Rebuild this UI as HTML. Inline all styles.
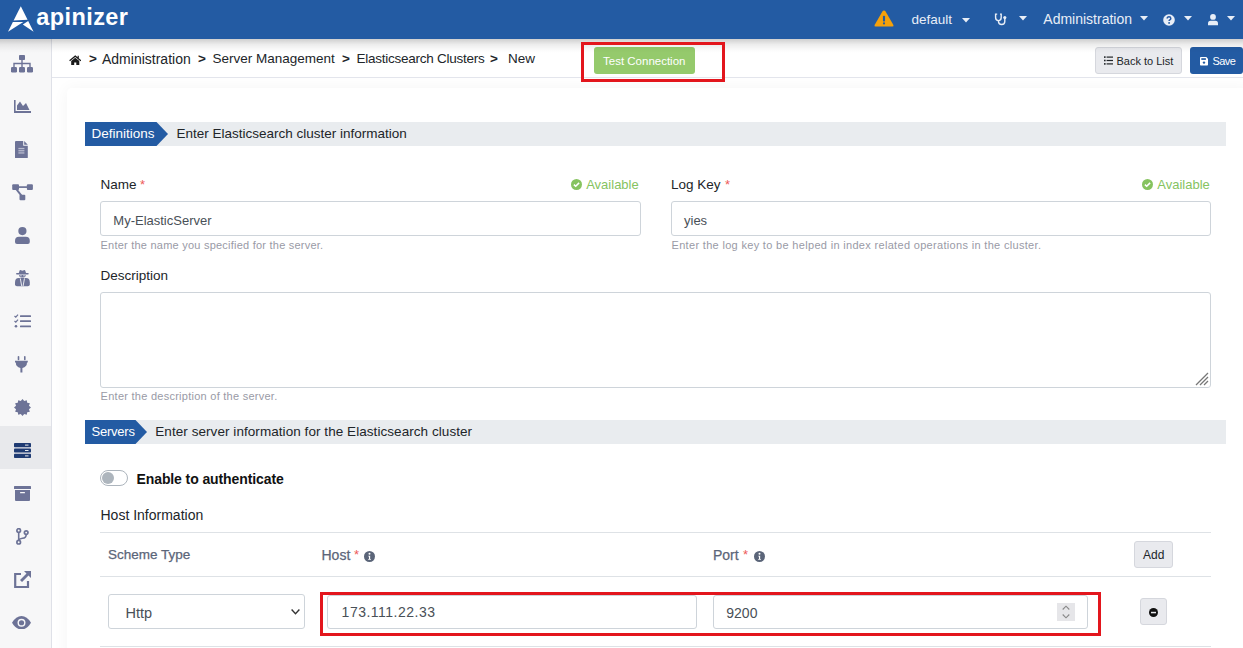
<!DOCTYPE html>
<html><head><meta charset="utf-8"><title>Apinizer</title>
<style>
html,body{margin:0;padding:0;width:1243px;height:648px;overflow:hidden;background:#fff;}
body{position:relative;font-family:"Liberation Sans",sans-serif;}
.t{position:absolute;white-space:nowrap;}
.r{position:absolute;}
</style></head><body>
<div class="r" style="left:0px;top:0px;width:1243px;height:39px;background:#235ba3;"></div>
<div class="r" style="left:0px;top:39px;width:1243px;height:14px;background:linear-gradient(rgba(0,0,0,0.19),rgba(0,0,0,0.07) 40%,rgba(0,0,0,0.015) 80%,rgba(0,0,0,0));z-index:5;"></div>
<svg class="r" style="left:4px;top:3px;width:34px;height:32px" viewBox="0 0 34 32">
<path d="M16.8 3.2 L23.6 16.8 L9.6 17.5 Z" fill="#fff"/>
<path d="M8.9 19 L19.3 19 L4 28.7 Z" fill="#fff"/>
<path d="M24.2 18 L18.8 21.5 L29.6 28.7 Z" fill="#fff"/>
</svg>
<div class="t" style="left:36.3px;top:5.61px;font-size:23.5px;line-height:23.5px;color:#fff;font-weight:bold;letter-spacing:0.4px;">apinizer</div>
<svg class="r" style="left:874px;top:10px;width:20px;height:17px" viewBox="0 0 20 17">
<path d="M10 0.5 Q11 0.5 11.6 1.5 L19.4 15 Q20 16.5 18.4 16.5 L1.6 16.5 Q0 16.5 0.6 15 L8.4 1.5 Q9 0.5 10 0.5Z" fill="#f5a10b"/>
<rect x="8.95" y="5.8" width="2.1" height="5.8" rx="0.8" fill="#235ba3"/><circle cx="10" cy="13.4" r="1.05" fill="#235ba3"/>
</svg>
<div class="t" style="left:911.5px;top:12.67px;font-size:13.5px;line-height:13.5px;color:#e8eef7;font-weight:normal;letter-spacing:0px;">default</div>
<svg class="r" style="left:961.5px;top:17.8px;width:8px;height:5px" viewBox="0 0 8 5"><path d="M0 0H8L4 4.5Z" fill="#e8eef7"/></svg>
<svg class="r" style="left:990px;top:10px;width:22px;height:20px" viewBox="0 0 22 20">
<path d="M7.2 4.1 H5.6 V7.5 Q5.6 10.6 8.5 10.6 Q11.2 10.6 11.2 7.5 V4.1 H10" fill="none" stroke="#e8eef7" stroke-width="1.4"/>
<path d="M8.5 10.6 V11.5 Q8.5 14.5 11.7 14.5 Q14.8 14.5 14.8 11.5 V8" fill="none" stroke="#e8eef7" stroke-width="1.4"/>
<circle cx="14.8" cy="7.6" r="1.6" fill="#e8eef7"/>
</svg>
<svg class="r" style="left:1019px;top:15.8px;width:8px;height:5px" viewBox="0 0 8 5"><path d="M0 0H8L4 4.5Z" fill="#e8eef7"/></svg>
<div class="t" style="left:1043.3px;top:12.35px;font-size:14px;line-height:14px;color:#e8eef7;font-weight:normal;letter-spacing:0px;">Administration</div>
<svg class="r" style="left:1140px;top:15.6px;width:8px;height:5px" viewBox="0 0 8 5"><path d="M0 0H8L4 4.5Z" fill="#e8eef7"/></svg>
<svg class="r" style="left:1163px;top:14px;width:12px;height:12px" viewBox="0 0 12 12">
<circle cx="6" cy="6" r="5.8" fill="#e8eef7"/>
<path d="M4.2 4.6 Q4.2 2.8 6 2.8 Q7.8 2.8 7.8 4.4 Q7.8 5.3 6.8 5.8 Q6.1 6.2 6.1 7" fill="none" stroke="#2559a5" stroke-width="1.5"/>
<circle cx="6.1" cy="8.9" r="0.95" fill="#235ba3"/>
</svg>
<svg class="r" style="left:1183.5px;top:15.6px;width:8px;height:5px" viewBox="0 0 8 5"><path d="M0 0H8L4 4.5Z" fill="#e8eef7"/></svg>
<svg class="r" style="left:1207px;top:13px;width:12px;height:13px" viewBox="0 0 12 13">
<circle cx="6" cy="3.9" r="2.9" fill="#e8eef7"/>
<path d="M1 12.3 V10.6 Q1 7.8 3.6 7.8 H8.4 Q11 7.8 11 10.6 V12.3 Z" fill="#e8eef7"/>
</svg>
<svg class="r" style="left:1227px;top:15.6px;width:8px;height:5px" viewBox="0 0 8 5"><path d="M0 0H8L4 4.5Z" fill="#e8eef7"/></svg>
<div class="r" style="left:0px;top:39px;width:51px;height:609px;background:#f7f7f8;"></div>
<div class="r" style="left:51px;top:39px;width:1px;height:609px;background:#dfe1e8;"></div>
<div class="r" style="left:0px;top:426px;width:51px;height:43px;background:#e8e9ec;"></div>
<svg class="r" style="left:11px;top:54.6px;width:22px;height:18px" viewBox="0 0 22 18">
<rect x="8" y="0" width="6" height="5" rx="0.8" fill="#6d7397"/>
<path d="M11 5V8 M3 12V8.5H19V12 M11 8V12" stroke="#6d7397" stroke-width="1.4" fill="none"/>
<rect x="0" y="12" width="6" height="5.5" rx="1.2" fill="#6d7397"/>
<rect x="8" y="12" width="6" height="5.5" rx="1.2" fill="#6d7397"/>
<rect x="16" y="12" width="6" height="5.5" rx="1.2" fill="#6d7397"/>
</svg>
<svg class="r" style="left:14px;top:100px;width:17px;height:13px" viewBox="0 0 17 13">
<path d="M0 0H1.6V11H17V13H0Z" fill="#6d7397"/>
<path d="M3 10V5.5L6 1.5L9 6L12 3L15.5 10Z" fill="#6d7397"/>
</svg>
<svg class="r" style="left:15.3px;top:140.6px;width:12.8px;height:17.4px" viewBox="0 0 12.8 17.4">
<path d="M1 0H8.2V4.3Q8.2 4.8 8.7 4.8H12.8V16.4Q12.8 17.4 11.8 17.4H1Q0 17.4 0 16.4V1Q0 0 1 0Z" fill="#6d7397"/>
<path d="M9.2 0L12.8 3.7H9.2Z" fill="#6d7397"/>
<rect x="3.4" y="6.9" width="6" height="1.3" fill="#b9bccf"/><rect x="3.4" y="9.1" width="6" height="1.3" fill="#b9bccf"/><rect x="3.4" y="11.3" width="6" height="1.3" fill="#b9bccf"/>
</svg>
<svg class="r" style="left:11.5px;top:184px;width:22px;height:17px" viewBox="0 0 22 17">
<rect x="0.2" y="0.3" width="6.8" height="5.8" rx="1" fill="#6d7397"/>
<rect x="14.9" y="0.3" width="6" height="5.8" rx="1" fill="#6d7397"/>
<rect x="7.5" y="10.8" width="5.8" height="5.5" rx="1" fill="#6d7397"/>
<path d="M6 3.1H15" stroke="#6d7397" stroke-width="1.7"/>
<path d="M4.3 5.2L9.6 11.8" stroke="#6d7397" stroke-width="1.9"/>
</svg>
<svg class="r" style="left:14.8px;top:226.6px;width:14.8px;height:17px" viewBox="0 0 14.8 17">
<circle cx="7.4" cy="4.1" r="4.1" fill="#6d7397"/>
<path d="M0 15V14Q0 9.8 4 9.8H10.8Q14.8 9.8 14.8 14V15Q14.8 17 12.8 17H2Q0 17 0 15Z" fill="#6d7397"/>
</svg>
<svg class="r" style="left:14.8px;top:270.3px;width:14.8px;height:16.3px" viewBox="0 0 14.8 16.3">
<path d="M3.7 3.3L4.6 0.4Q4.8 0 5.3 0.1L7.4 0.8L9.5 0.1Q10 0 10.2 0.4L11.1 3.3Z" fill="#6d7397"/>
<rect x="1.1" y="3.1" width="12.6" height="1.3" rx="0.6" fill="#6d7397"/>
<path d="M4.1 4.9H10.7Q10.7 7.6 7.4 7.6Q4.1 7.6 4.1 4.9Z" fill="#6d7397"/>
<rect x="4.8" y="5.3" width="2" height="1" fill="#c9cbd9"/><rect x="8" y="5.3" width="2" height="1" fill="#c9cbd9"/>
<path d="M0 14.3V12.5Q0 8.1 3.8 8.1H11Q14.8 8.1 14.8 12.5V14.3Q14.8 16.3 12.8 16.3H2Q0 16.3 0 14.3Z" fill="#6d7397"/>
<path d="M5.3 8.4L6.7 16 M9.5 8.4L8.1 16" stroke="#f7f7f8" stroke-width="0.9"/>
</svg>
<svg class="r" style="left:13.5px;top:314px;width:17px;height:14px" viewBox="0 0 17 14">
<path d="M0.5 2L1.8 3.2L4 0.6 M0.5 7L1.8 8.2L4 5.6" stroke="#6d7397" stroke-width="1.2" fill="none"/>
<circle cx="2" cy="12.3" r="1.3" fill="#6d7397"/>
<rect x="6" y="1.2" width="11" height="1.8" rx="0.5" fill="#6d7397"/>
<rect x="6" y="6.2" width="11" height="1.8" rx="0.5" fill="#6d7397"/>
<rect x="6" y="11.4" width="11" height="1.8" rx="0.5" fill="#6d7397"/>
</svg>
<svg class="r" style="left:15.3px;top:356.3px;width:12.8px;height:16.4px" viewBox="0 0 12.8 16.4">
<rect x="2.7" y="0" width="1.6" height="4.2" rx="0.8" fill="#6d7397"/>
<rect x="9" y="0" width="1.6" height="4.2" rx="0.8" fill="#6d7397"/>
<path d="M0 4.7H12.8V6.4H12Q12 10.8 7.4 12.1V16.4H5.4V12.1Q0.8 10.8 0.8 6.4H0Z" fill="#6d7397"/>
</svg>
<svg class="r" style="left:14px;top:399px;width:17px;height:17px" viewBox="0 0 16.8 16.8">
<polygon points="16.80,8.40 14.78,10.11 15.67,12.60 13.07,13.07 12.60,15.67 10.11,14.78 8.40,16.80 6.69,14.78 4.20,15.67 3.73,13.07 1.13,12.60 2.02,10.11 0.00,8.40 2.02,6.69 1.13,4.20 3.73,3.73 4.20,1.13 6.69,2.02 8.40,0.00 10.11,2.02 12.60,1.13 13.07,3.73 15.67,4.20 14.78,6.69" fill="#6d7397"/>
</svg>
<svg class="r" style="left:14px;top:443px;width:17px;height:15px" viewBox="0 0 17 15">
<rect x="0" y="0" width="17" height="4.2" rx="0.8" fill="#1f3b73"/>
<rect x="0" y="5.4" width="17" height="4.2" rx="0.8" fill="#1f3b73"/>
<rect x="0" y="10.8" width="17" height="4.2" rx="0.8" fill="#1f3b73"/>
<rect x="11" y="1.6" width="3.5" height="1" fill="#e8e9ec"/><rect x="11" y="7" width="3.5" height="1" fill="#e8e9ec"/><rect x="11" y="12.4" width="3.5" height="1" fill="#e8e9ec"/>
</svg>
<svg class="r" style="left:14px;top:486px;width:17px;height:15px" viewBox="0 0 17 15">
<rect x="0" y="0" width="17" height="3" rx="0.5" fill="#6d7397"/>
<path d="M1 4H16V14Q16 15 15 15H2Q1 15 1 14Z" fill="#6d7397"/>
<rect x="6" y="6" width="5" height="1.3" rx="0.6" fill="#f7f7f9"/>
</svg>
<svg class="r" style="left:15.5px;top:528px;width:14px;height:17px" viewBox="0 0 14 17">
<circle cx="2.7" cy="2.5" r="1.8" fill="none" stroke="#6d7397" stroke-width="1.7"/>
<circle cx="2.7" cy="14.2" r="1.8" fill="none" stroke="#6d7397" stroke-width="1.7"/>
<circle cx="10.2" cy="4.6" r="1.8" fill="none" stroke="#6d7397" stroke-width="1.7"/>
<path d="M2.7 4.3V12.4 M10.2 6.4Q10.2 9.8 6.5 10.3Q3.2 10.8 2.7 12.4" fill="none" stroke="#6d7397" stroke-width="1.6"/>
</svg>
<svg class="r" style="left:14px;top:571px;width:17px;height:17px" viewBox="0 0 17 17">
<path d="M7 3H1.2V16H14V10" fill="none" stroke="#6d7397" stroke-width="2.2"/>
<path d="M10 0H17V7L14.5 4.5L8 11L6 9L12.5 2.5Z" fill="#6d7397"/>
</svg>
<svg class="r" style="left:12px;top:615.5px;width:19px;height:13.5px" viewBox="0 0 19 13.5">
<path d="M0 6.75Q4 0 9.5 0Q15 0 19 6.75Q15 13.5 9.5 13.5Q4 13.5 0 6.75Z" fill="#6d7397"/>
<circle cx="9.5" cy="6.75" r="4" fill="#f7f7f9"/>
<circle cx="9.5" cy="6.75" r="2.6" fill="#6d7397"/>
</svg>
<div class="r" style="left:52px;top:39px;width:1191px;height:38px;background:#fff;"></div>
<div class="r" style="left:52px;top:77px;width:1191px;height:1px;background:#e3e5ec;"></div>
<div class="r" style="left:52px;top:78px;width:1191px;height:570px;background:#fff;"></div>
<div class="r" style="left:67px;top:88px;width:1183px;height:572px;background:#fff;box-shadow:0 1px 16px 1px rgba(0,0,0,0.045);border-radius:5px;"></div>
<svg class="r" style="left:68.5px;top:54.5px;width:12.5px;height:10.5px" viewBox="0 0 12.5 10.5">
<path d="M6.25 0.3L0.2 5.3L1 6.2L6.25 2L11.5 6.2L12.3 5.3L9.8 3.2V0.8H8.6V2.2Z" fill="#1a1a1a"/>
<path d="M2.2 6V10.5H5.2V7.6H7.3V10.5H10.3V6L6.25 2.7Z" fill="#1a1a1a"/>
</svg>
<div class="t" style="left:89.0px;top:52.37px;font-size:13.5px;line-height:13.5px;color:#212529;font-weight:bold;letter-spacing:0px;">&gt;</div>
<div class="t" style="left:102.0px;top:51.95px;font-size:14px;line-height:14px;color:#212529;font-weight:normal;letter-spacing:0px;">Administration</div>
<div class="t" style="left:198.0px;top:52.37px;font-size:13.5px;line-height:13.5px;color:#212529;font-weight:bold;letter-spacing:0px;">&gt;</div>
<div class="t" style="left:212.5px;top:52.37px;font-size:13.5px;line-height:13.5px;color:#212529;font-weight:normal;letter-spacing:0px;">Server Management</div>
<div class="t" style="left:342.0px;top:52.37px;font-size:13.5px;line-height:13.5px;color:#212529;font-weight:bold;letter-spacing:0px;">&gt;</div>
<div class="t" style="left:356.5px;top:52.37px;font-size:13.5px;line-height:13.5px;color:#212529;font-weight:normal;letter-spacing:-0.25px;">Elasticsearch Clusters</div>
<div class="t" style="left:490.0px;top:52.37px;font-size:13.5px;line-height:13.5px;color:#212529;font-weight:bold;letter-spacing:0px;">&gt;</div>
<div class="t" style="left:508.0px;top:52.37px;font-size:13.5px;line-height:13.5px;color:#212529;font-weight:normal;letter-spacing:0px;">New</div>
<div class="r" style="left:594px;top:47px;width:101px;height:27px;background:#95ca6c;border-radius:3px;"></div>
<div class="t" style="left:603.0px;top:56.27px;font-size:11.5px;line-height:11.5px;color:#fff;font-weight:normal;letter-spacing:0px;">Test Connection</div>
<div class="r" style="left:581px;top:42px;width:144px;height:40px;border:3px solid #e3161d;box-sizing:border-box;z-index:6;"></div>
<div class="r" style="left:1095px;top:47px;width:87px;height:27px;background:#e9eaee;border:1px solid #d5d7dd;box-sizing:border-box;border-radius:3px;"></div>
<svg class="r" style="left:1104px;top:56px;width:9px;height:9px" viewBox="0 0 9 9">
<rect x="0" y="0.3" width="1.6" height="1.6" fill="#212529"/><rect x="0" y="3.7" width="1.6" height="1.6" fill="#212529"/><rect x="0" y="7.1" width="1.6" height="1.6" fill="#212529"/>
<rect x="2.6" y="0.5" width="6.4" height="1.2" fill="#212529"/><rect x="2.6" y="3.9" width="6.4" height="1.2" fill="#212529"/><rect x="2.6" y="7.3" width="6.4" height="1.2" fill="#212529"/>
</svg>
<div class="t" style="left:1116.5px;top:55.69px;font-size:11px;line-height:11px;color:#212529;font-weight:normal;letter-spacing:0px;">Back to List</div>
<div class="r" style="left:1190px;top:47px;width:53px;height:27px;background:#235ba3;border-radius:3px;"></div>
<svg class="r" style="left:1200px;top:57px;width:8px;height:8.5px" viewBox="0 0 8 8.5">
<path d="M0.8 0H6.3L8 1.7V7.7Q8 8.5 7.2 8.5H0.8Q0 8.5 0 7.7V0.8Q0 0 0.8 0Z" fill="#fff"/>
<rect x="1.3" y="1.2" width="4.6" height="1.7" fill="#235ba3"/>
<circle cx="4" cy="5.6" r="1.2" fill="#235ba3"/>
</svg>
<div class="t" style="left:1212.5px;top:55.59px;font-size:11px;line-height:11px;color:#fff;font-weight:normal;letter-spacing:-0.6px;">Save</div>
<div class="r" style="left:85px;top:122px;width:1141px;height:24px;background:#e9ecef;"></div>
<div class="r" style="left:85px;top:122px;width:71px;height:24px;background:#235ba3;"></div>
<svg class="r" style="left:156px;top:122px;width:12px;height:24px" viewBox="0 0 12 24"><path d="M0 0H0.5L12 12L0.5 24H0Z" fill="#235ba3"/></svg>
<div class="t" style="left:91.6px;top:127.07px;font-size:13.5px;line-height:13.5px;color:#fff;font-weight:normal;letter-spacing:0px;">Definitions</div>
<div class="t" style="left:176.5px;top:127.07px;font-size:13.5px;line-height:13.5px;color:#212529;font-weight:normal;letter-spacing:0px;">Enter Elasticsearch cluster information</div>
<div class="t" style="left:100.5px;top:177.57px;font-size:13.5px;line-height:13.5px;color:#212529;font-weight:normal;letter-spacing:0px;">Name</div>
<div class="t" style="left:140.0px;top:178.00px;font-size:13px;line-height:13px;color:#ee5a5a;font-weight:normal;letter-spacing:0px;">*</div>
<svg class="r" style="left:571px;top:179.3px;width:11px;height:11px" viewBox="0 0 11 11"><circle cx="5.5" cy="5.5" r="5.5" fill="#86c35f"/><path d="M2.9 5.6L4.7 7.3L8.1 3.9" stroke="#fff" stroke-width="1.5" fill="none"/></svg>
<div class="t" style="left:586.2px;top:178.00px;font-size:13px;line-height:13px;color:#86c35f;font-weight:normal;letter-spacing:0px;">Available</div>
<div class="r" style="left:100px;top:201px;width:541px;height:35px;border:1px solid #ced4da;box-sizing:border-box;border-radius:3px;background:#fff;"></div>
<div class="t" style="left:113.3px;top:213.80px;font-size:13px;line-height:13px;color:#495057;font-weight:normal;letter-spacing:0px;">My-ElasticServer</div>
<div class="t" style="left:100.5px;top:239.89px;font-size:11px;line-height:11px;color:#999aa6;font-weight:normal;letter-spacing:0.23px;">Enter the name you specified for the server.</div>
<div class="t" style="left:671.0px;top:177.57px;font-size:13.5px;line-height:13.5px;color:#212529;font-weight:normal;letter-spacing:0px;">Log Key</div>
<div class="t" style="left:725.0px;top:178.00px;font-size:13px;line-height:13px;color:#ee5a5a;font-weight:normal;letter-spacing:0px;">*</div>
<svg class="r" style="left:1142px;top:179.3px;width:11px;height:11px" viewBox="0 0 11 11"><circle cx="5.5" cy="5.5" r="5.5" fill="#86c35f"/><path d="M2.9 5.6L4.7 7.3L8.1 3.9" stroke="#fff" stroke-width="1.5" fill="none"/></svg>
<div class="t" style="left:1157.3px;top:178.00px;font-size:13px;line-height:13px;color:#86c35f;font-weight:normal;letter-spacing:0px;">Available</div>
<div class="r" style="left:671px;top:201px;width:540px;height:35px;border:1px solid #ced4da;box-sizing:border-box;border-radius:3px;background:#fff;"></div>
<div class="t" style="left:684.0px;top:213.80px;font-size:13px;line-height:13px;color:#495057;font-weight:normal;letter-spacing:0px;">yies</div>
<div class="t" style="left:671.5px;top:239.89px;font-size:11px;line-height:11px;color:#999aa6;font-weight:normal;letter-spacing:0.32px;">Enter the log key to be helped in index related operations in the cluster.</div>
<div class="t" style="left:100.6px;top:268.57px;font-size:13.5px;line-height:13.5px;color:#212529;font-weight:normal;letter-spacing:0px;">Description</div>
<div class="r" style="left:100px;top:292px;width:1111px;height:96px;border:1px solid #ced4da;box-sizing:border-box;border-radius:3px;background:#fff;"></div>
<svg class="r" style="left:1194px;top:371px;width:15px;height:15px" viewBox="0 0 15 15">
<path d="M14 2L2 14 M14 6L6 14 M14 10L10 14" stroke="#777" stroke-width="1.3"/>
</svg>
<div class="t" style="left:100.6px;top:390.79px;font-size:11px;line-height:11px;color:#999aa6;font-weight:normal;letter-spacing:0.26px;">Enter the description of the server.</div>
<div class="r" style="left:85px;top:420px;width:1141px;height:24px;background:#e9ecef;"></div>
<div class="r" style="left:85px;top:420px;width:50px;height:24px;background:#235ba3;"></div>
<svg class="r" style="left:135px;top:420px;width:12px;height:24px" viewBox="0 0 12 24"><path d="M0 0H0.5L12 12L0.5 24H0Z" fill="#235ba3"/></svg>
<div class="t" style="left:91.6px;top:425.00px;font-size:13px;line-height:13px;color:#fff;font-weight:normal;letter-spacing:-0.25px;">Servers</div>
<div class="t" style="left:155.3px;top:425.07px;font-size:13.5px;line-height:13.5px;color:#212529;font-weight:normal;letter-spacing:0.06px;">Enter server information for the Elasticsearch cluster</div>
<div class="r" style="left:100px;top:470px;width:28px;height:16px;border:1px solid #adb5bd;box-sizing:border-box;border-radius:8px;background:#fff;"></div>
<div class="r" style="left:102px;top:472px;width:12px;height:12px;background:#adb5bd;border-radius:50%;"></div>
<div class="t" style="left:136.5px;top:471.75px;font-size:14px;line-height:14px;color:#111;font-weight:bold;letter-spacing:-0.1px;">Enable to authenticate</div>
<div class="t" style="left:100.5px;top:508.15px;font-size:14px;line-height:14px;color:#212529;font-weight:normal;letter-spacing:0px;">Host Information</div>
<div class="r" style="left:100px;top:532px;width:1111px;height:1px;background:#dee2e6;"></div>
<div class="r" style="left:100px;top:576px;width:1111px;height:1px;background:#dee2e6;"></div>
<div class="r" style="left:100px;top:646px;width:1111px;height:1px;background:#dee2e6;"></div>
<div class="t" style="left:108.0px;top:548.37px;font-size:13.5px;line-height:13.5px;color:#5b6579;font-weight:normal;letter-spacing:0px;-webkit-text-stroke:0.25px #5b6579;">Scheme Type</div>
<div class="t" style="left:321.5px;top:548.05px;font-size:14px;line-height:14px;color:#5b6579;font-weight:normal;letter-spacing:0px;-webkit-text-stroke:0.25px #5b6579;">Host</div>
<div class="t" style="left:354.0px;top:547.60px;font-size:13px;line-height:13px;color:#ee5a5a;font-weight:normal;letter-spacing:0px;">*</div>
<svg class="r" style="left:364px;top:551px;width:11px;height:11px" viewBox="0 0 10 10"><circle cx="5" cy="5" r="5" fill="#5b6579"/><circle cx="5" cy="2.6" r="0.9" fill="#fff"/><path d="M3.9 4.3H5.6V7.3H6.3V8H3.8V7.3H4.5V5H3.9Z" fill="#fff"/></svg>
<div class="t" style="left:713.0px;top:548.05px;font-size:14px;line-height:14px;color:#5b6579;font-weight:normal;letter-spacing:0px;-webkit-text-stroke:0.25px #5b6579;">Port</div>
<div class="t" style="left:743.0px;top:547.60px;font-size:13px;line-height:13px;color:#ee5a5a;font-weight:normal;letter-spacing:0px;">*</div>
<svg class="r" style="left:753.5px;top:551px;width:11px;height:11px" viewBox="0 0 10 10"><circle cx="5" cy="5" r="5" fill="#5b6579"/><circle cx="5" cy="2.6" r="0.9" fill="#fff"/><path d="M3.9 4.3H5.6V7.3H6.3V8H3.8V7.3H4.5V5H3.9Z" fill="#fff"/></svg>
<div class="r" style="left:1134px;top:541px;width:39px;height:27px;background:#e9eaee;border:1px solid #d5d7dd;box-sizing:border-box;border-radius:3px;"></div>
<div class="t" style="left:1143.0px;top:548.94px;font-size:12px;line-height:12px;color:#212529;font-weight:normal;letter-spacing:0px;">Add</div>
<div class="r" style="left:108px;top:594px;width:197px;height:35px;border:1px solid #ced4da;box-sizing:border-box;border-radius:3px;background:#fff;"></div>
<div class="t" style="left:125.5px;top:606.13px;font-size:14.5px;line-height:14.5px;color:#495057;font-weight:normal;letter-spacing:0px;">Http</div>
<svg class="r" style="left:290.5px;top:609px;width:9px;height:6px" viewBox="0 0 9 6"><path d="M0.6 0.6L4.5 4.8L8.4 0.6" stroke="#333" stroke-width="1.4" fill="none"/></svg>
<div class="r" style="left:327px;top:595px;width:370px;height:34px;border:1px solid #ced4da;box-sizing:border-box;border-radius:3px;background:#fff;"></div>
<div class="t" style="left:341.6px;top:605.15px;font-size:14px;line-height:14px;color:#495057;font-weight:normal;letter-spacing:0.5px;">173.111.22.33</div>
<div class="r" style="left:713px;top:595px;width:375px;height:34px;border:1px solid #ced4da;box-sizing:border-box;border-radius:3px;background:#fff;"></div>
<div class="t" style="left:726.3px;top:605.95px;font-size:14px;line-height:14px;color:#495057;font-weight:normal;letter-spacing:0px;">9200</div>
<div class="r" style="left:1057px;top:603px;width:18px;height:18px;background:#e6e6e9;"></div>
<svg class="r" style="left:1062px;top:605px;width:8px;height:14px" viewBox="0 0 8 14"><path d="M0.7 4.5L4 1.2L7.3 4.5 M0.7 9.5L4 12.8L7.3 9.5" stroke="#888" stroke-width="1.1" fill="none"/></svg>
<div class="r" style="left:320px;top:592px;width:781px;height:44px;border:3px solid #e3161d;box-sizing:border-box;"></div>
<div class="r" style="left:1140px;top:598px;width:27px;height:27px;background:#e9eaee;border:1px solid #d5d7dd;box-sizing:border-box;border-radius:3px;"></div>
<svg class="r" style="left:1149px;top:608px;width:9px;height:9px" viewBox="0 0 9 9"><circle cx="4.5" cy="4.5" r="4.5" fill="#111"/><rect x="2" y="3.8" width="5" height="1.5" fill="#e9eaee"/></svg>
</body></html>
